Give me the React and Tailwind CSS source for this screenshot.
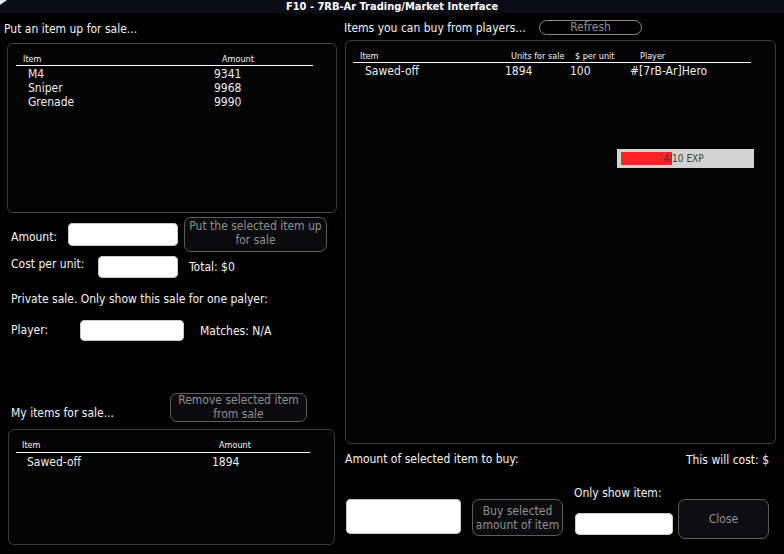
import React from "react";

const font = { fontFamily: '"DejaVu Sans Condensed", "DejaVu Sans", sans-serif' };

function Panel({ className, children }) {
  return (
    <div className={"rounded-[6px] border border-[#3c3c3c] bg-[#030304] " + className}>
      {children}
    </div>
  );
}

function Btn({ className, children }) {
  return (
    <div className={"flex items-center justify-center text-center border border-[#5c5c5c] bg-[#0b0b0e] text-[#8e8e8e] text-[12px] leading-[14px] " + className}>
      {children}
    </div>
  );
}

function Field({ className }) {
  return <div className={"bg-white rounded-[5px] shadow-[inset_0_0_0_1px_#c8c8c8] " + className} />;
}

export default function App() {
  return (
    <div style={font} className="relative w-[784px] h-[554px] overflow-hidden bg-black text-[#f4f4f4] text-[12px]">
      {/* title bar */}
      <div className="relative h-[13px] bg-[#0c0c17] flex items-center justify-center">
        <svg className="absolute left-0 top-0" width="8" height="6" viewBox="0 0 8 6">
          <polygon points="0,0 7,0 0,5" fill="#e6e6e6" />
        </svg>
        <span className="text-[11px] leading-[13px] font-bold text-white">F10 - 7RB-Ar Trading/Market Interface</span>
      </div>

      <div className="flex">
        {/* left column */}
        <div className="w-[340px] shrink-0">
          <div className="mt-[9px] pl-[4px] leading-[14px]">Put an item up for sale...</div>

          <Panel className="mt-[7px] ml-[7px] w-[330px] h-[170px]">
            <div className="ml-[8px] w-[297px]">
              <div className="mt-[9px] flex text-[9px] leading-[12px] border-b border-white">
                <div className="pl-[7px] w-[206px]">Item</div>
                <div>Amount</div>
              </div>
              <div className="mt-[1px] text-[#ececec]">
                {[["M4", "9341"], ["Sniper", "9968"], ["Grenade", "9990"]].map(([n, a]) => (
                  <div key={n} className="flex leading-[14px]">
                    <div className="pl-[12px] w-[198px]">{n}</div>
                    <div>{a}</div>
                  </div>
                ))}
              </div>
            </div>
          </Panel>

          <div className="mt-[4px] flex items-center h-[35px]">
            <div className="pl-[11px] w-[68px] pt-[5px]">Amount:</div>
            <Field className="w-[110px] h-[23px]" />
            <Btn className="ml-[6px] w-[143px] h-[35px] rounded-[7px]">
              <span className="-mt-[3px]">Put the selected item up<br />for sale</span>
            </Btn>
          </div>

          <div className="mt-[4px] flex items-center h-[22px]">
            <div className="pl-[11px] w-[98px] pb-[6px]">Cost per unit:</div>
            <Field className="w-[80px] h-[22px]" />
            <div className="ml-[11px]">Total: $0</div>
          </div>

          <div className="mt-[14px] pl-[11px] leading-[14px]">Private sale. Only show this sale for one palyer:</div>

          <div className="mt-[14px] flex items-center h-[21px]">
            <div className="pl-[11px] w-[80px] pb-[2px]">Player:</div>
            <Field className="w-[104px] h-[21px]" />
            <div className="ml-[16px]">Matches: N/A</div>
          </div>

          <div className="mt-[52px] flex items-end">
            <div className="pl-[11px] w-[170px] leading-[14px] pb-[2px]">My items for sale...</div>
            <Btn className="w-[137px] h-[29px] rounded-[7px]">
              <span className="-mt-[2px]">Remove selected item<br />from sale</span>
            </Btn>
          </div>

          <Panel className="mt-[7px] ml-[8px] w-[327px] h-[116px]">
            <div className="ml-[7px] w-[294px]">
              <div className="mt-[9px] flex text-[9px] leading-[13px] border-b border-white">
                <div className="pl-[6px] w-[203px]">Item</div>
                <div>Amount</div>
              </div>
              <div className="mt-[2px] flex leading-[14px] text-[#ececec]">
                <div className="pl-[11px] w-[196px]">Sawed-off</div>
                <div>1894</div>
              </div>
            </div>
          </Panel>
        </div>

        {/* right column */}
        <div className="flex-1">
          <div className="mt-[7px] flex items-center h-[15px]">
            <div className="pl-[4px] w-[199px] pt-[1px]">Items you can buy from players...</div>
            <div className="w-[103px] h-[15px] rounded-full border border-[#8a8a8a] flex items-center justify-center text-[#8e8e8e] leading-[13px]">
              Refresh
            </div>
          </div>

          <Panel className="mt-[5px] ml-[5px] w-[431px] h-[404px]">
            <div className="ml-[7px] w-[398px]">
              <div className="mt-[9px] flex text-[9px] leading-[12px] border-b border-white">
                <div className="pl-[7px] w-[158px]">Item</div>
                <div className="w-[64px]">Units for sale</div>
                <div className="w-[65px]">$ per unit</div>
                <div>Player</div>
              </div>
              <div className="mt-[1px] flex leading-[14px] text-[#ececec]">
                <div className="pl-[12px] w-[152px]">Sawed-off</div>
                <div className="w-[65px]">1894</div>
                <div className="w-[60px]">100</div>
                <div>#[7rB-Ar]Hero</div>
              </div>
            </div>
          </Panel>

          <div className="mt-[8px] flex justify-between pl-[5px] pr-[15px] leading-[14px]">
            <div>Amount of selected item to buy:</div>
            <div className="pt-[1px]">This will cost: $</div>
          </div>

          <div className="mt-[19px] flex items-start pl-[6px]">
            <Field className="mt-[13px] w-[115px] h-[35px]" />
            <Btn className="mt-[13px] ml-[11px] w-[91px] h-[37px] rounded-[7px]">
              Buy selected<br />amount of item
            </Btn>
            <div className="ml-[11px]">
              <div className="leading-[14px]">Only show item:</div>
              <Field className="mt-[13px] ml-[1px] w-[98px] h-[22px]" />
            </div>
            <Btn className="mt-[13px] ml-[5px] w-[91px] h-[40px] rounded-[7px] bg-[#0e0e12]">
              Close
            </Btn>
          </div>
        </div>
      </div>

      {/* HUD exp bar over the window */}
      <div className="absolute left-[617px] top-[149px] w-[137px] h-[19px] bg-[#d3d3d3]">
        <div className="absolute left-[4px] top-[3px] w-[51px] h-[13px] bg-[#fb2323]" />
        <div className="absolute inset-0 flex items-center justify-center pr-[4px] text-[10px] text-[#404040]">
          4/10 EXP
        </div>
      </div>
    </div>
  );
}
